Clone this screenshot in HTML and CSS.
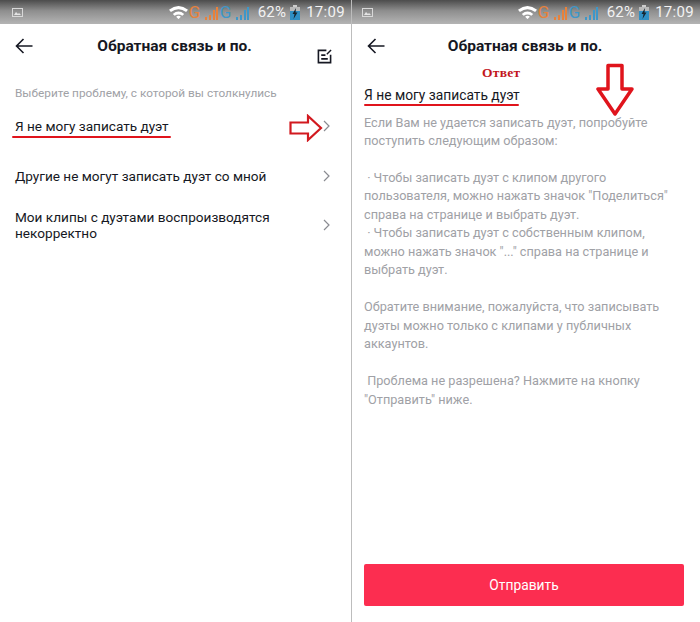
FILE: index.html
```html
<!DOCTYPE html>
<html lang="ru">
<head>
    <meta charset="UTF-8">
    <title>Обратная связь и по.</title>
    <link rel="stylesheet" href="styles.css">
</head>
<body>
    <div class="screens">
        <!-- Left screen: list of problems -->
        <section class="screen screen-left">
            <div class="status-bar">
                <svg class="pic-icon" viewBox="0 0 11 9"><rect x="0.5" y="0.5" width="10" height="8" fill="none" stroke="#d8d8d8"/><path d="M2 7l2-3 2 2 1-1 2 2z" fill="#e4e4e4"/></svg>
                <div class="status-right">
                    <svg class="wifi" viewBox="0 0 20 14"><path d="M0 4.500Q10-3 20 4.500L18 7Q10 1 2 7zM4 9Q10 4 16 9L14 11Q10 8 6 11zM7.500 12Q10 10 12.500 12L10 14.500z" fill="#fff"/></svg>
                    <span class="net net-orange">G</span>
                    <svg class="bars" viewBox="0 0 14 14"><path d="M1 14h2v-3H1zM5 14h2V9H5zM9 14h2V4H9zM12 14h2V1h-2z" fill="#e8813a"/></svg>
                    <span class="net net-blue">G</span>
                    <svg class="bars" viewBox="0 0 14 14"><path d="M1 14h2v-3H1zM5 14h2V9H5zM9 14h2V4H9zM12 14h2V1h-2z" fill="#3d97c9"/></svg>
                    <span class="percent">62%</span>
                    <svg class="battery" viewBox="0 0 10 15"><rect x="3" y="0" width="4" height="2" fill="#ccc"/><rect x="0" y="2" width="10" height="13" fill="#2f8fc4"/><rect x="0" y="2" width="10" height="4" fill="#b9b9b9"/><path d="M6 3L2.500 9h2L3.500 14 7.500 7.500h-2z" fill="#16242e"/></svg>
                    <span class="clock">17:09</span>
                </div>
            </div>
            <header class="top-bar">
                <svg class="back" viewBox="0 0 18 16"><path d="M17.500 8H1.500M8.500 1L1.500 8l7 7" fill="none" stroke="#161823" stroke-width="1.600"/></svg>
                <h1>Обратная связь и по.</h1>
                <svg class="report" viewBox="0 0 16 16"><path d="M10 1.500H1.500v13h13V6M4.500 6.500H9M4.500 10.500h7" fill="none" stroke="#161823" stroke-width="1.700"/><path d="M10.500 5.500L15 1" fill="none" stroke="#161823" stroke-width="1.500"/></svg>
            </header>
            <p class="hint">Выберите проблему, с которой вы столкнулись</p>
            <ul class="problems">
                <li class="problem problem-first">
                    <span>Я не могу записать дуэт</span>
                    <svg class="chevron" viewBox="0 0 7 12"><path d="M1 1l5 5-5 5" fill="none" stroke="#8a8b91" stroke-width="1.200"/></svg>
                </li>
                <li class="problem problem-second">
                    <span>Другие не могут записать дуэт со мной</span>
                    <svg class="chevron" viewBox="0 0 7 12"><path d="M1 1l5 5-5 5" fill="none" stroke="#8a8b91" stroke-width="1.200"/></svg>
                </li>
                <li class="problem problem-third">
                    <span>Мои клипы с дуэтами воспроизводятся некорректно</span>
                    <svg class="chevron" viewBox="0 0 7 12"><path d="M1 1l5 5-5 5" fill="none" stroke="#8a8b91" stroke-width="1.200"/></svg>
                </li>
            </ul>
            <!-- red marks drawn over the screenshot -->
            <div class="underline underline-left"></div>
            <svg class="arrow-right" viewBox="0 0 34 28"><path d="M1.500 8.500H19V2L32 14 19 26V19.500H1.500z" fill="#fff" stroke="#d2191f" stroke-width="2.200"/></svg>
        </section>

        <!-- Right screen: answer -->
        <section class="screen screen-right">
            <div class="status-bar">
                <svg class="pic-icon" viewBox="0 0 11 9"><rect x="0.5" y="0.5" width="10" height="8" fill="none" stroke="#d8d8d8"/><path d="M2 7l2-3 2 2 1-1 2 2z" fill="#e4e4e4"/></svg>
                <div class="status-right">
                    <svg class="wifi" viewBox="0 0 20 14"><path d="M0 4.500Q10-3 20 4.500L18 7Q10 1 2 7zM4 9Q10 4 16 9L14 11Q10 8 6 11zM7.500 12Q10 10 12.500 12L10 14.500z" fill="#fff"/></svg>
                    <span class="net net-orange">G</span>
                    <svg class="bars" viewBox="0 0 14 14"><path d="M1 14h2v-3H1zM5 14h2V9H5zM9 14h2V4H9zM12 14h2V1h-2z" fill="#e8813a"/></svg>
                    <span class="net net-blue">G</span>
                    <svg class="bars" viewBox="0 0 14 14"><path d="M1 14h2v-3H1zM5 14h2V9H5zM9 14h2V4H9zM12 14h2V1h-2z" fill="#3d97c9"/></svg>
                    <span class="percent">62%</span>
                    <svg class="battery" viewBox="0 0 10 15"><rect x="3" y="0" width="4" height="2" fill="#ccc"/><rect x="0" y="2" width="10" height="13" fill="#2f8fc4"/><rect x="0" y="2" width="10" height="4" fill="#b9b9b9"/><path d="M6 3L2.500 9h2L3.500 14 7.500 7.500h-2z" fill="#16242e"/></svg>
                    <span class="clock">17:09</span>
                </div>
            </div>
            <header class="top-bar">
                <svg class="back" viewBox="0 0 18 16"><path d="M17.500 8H1.500M8.500 1L1.500 8l7 7" fill="none" stroke="#161823" stroke-width="1.600"/></svg>
                <h1>Обратная связь и по.</h1>
            </header>
            <div class="answer">
                <h2>Я не могу записать дуэт</h2>
                <div class="answer-text">
                    <p>Если Вам не удается записать дуэт, попробуйте поступить следующим образом:</p>
                    <p>&nbsp;· Чтобы записать дуэт с клипом другого пользователя, можно нажать значок "Поделиться" справа на странице и выбрать дуэт.<br>&nbsp;· Чтобы записать дуэт с собственным клипом, можно нажать значок "..." справа на странице и выбрать дуэт.</p>
                    <p>Обратите внимание, пожалуйста, что записывать дуэты можно только с клипами у публичных аккаунтов.</p>
                    <p>&nbsp;Проблема не разрешена? Нажмите на кнопку "Отправить" ниже.</p>
                </div>
            </div>
            <button class="send">Отправить</button>
            <!-- red marks drawn over the screenshot -->
            <div class="answer-label">Ответ</div>
            <div class="underline underline-right"></div>
            <svg class="arrow-down" viewBox="0 0 38 54"><path d="M12 2.500H26V26H36L19 51 2 26H12z" fill="#fff" fill-opacity="0.1" stroke="#e0141c" stroke-width="3.500" stroke-linejoin="round"/></svg>
        </section>
    </div>
</body>
</html>
```

FILE: styles.css
```css
/* Reset */
* {
    margin: 0;
    padding: 0;
    box-sizing: border-box;
}

body {
    width: 700px;
    height: 622px;
    overflow: hidden;
    background: #fff;
    font-family: 'Roboto', 'Liberation Sans', sans-serif;
    color: #161823;
}

.screens {
    display: flex;
    height: 622px;
}

.screen {
    position: relative;
    display: flex;
    flex-direction: column;
    height: 622px;
}

.screen-left {
    width: 352px;
    border-right: 1px solid #bdbdbd;
}

.screen-right {
    width: 348px;
}

/* Status bar */
.status-bar {
    display: flex;
    align-items: center;
    justify-content: space-between;
    height: 24px;
    padding: 0 6px 0 12px;
    background: linear-gradient(#4c4c4c, #8e8e8e 45%, #b4b4b4);
    flex-shrink: 0;
}

.screen-right .status-bar {
    padding: 0 6px 0 10px;
}

.pic-icon {
    width: 11px;
    height: 9px;
}

.status-right {
    display: flex;
    align-items: center;
    color: #f2f2f2;
    font-size: 15px;
}

.wifi {
    width: 19px;
    height: 14px;
    margin-right: 1px;
}

.net {
    width: 13px;
    font-size: 17px;
    line-height: 20px;
}

.net-orange { color: #e8813a; }
.net-blue { color: #3d97c9; }

.bars {
    width: 18px;
    height: 14px;
    margin-top: 1px;
}

.percent {
    margin-left: 7px;
    letter-spacing: 0.2px;
}

.battery {
    width: 10px;
    height: 15px;
    margin-left: 4px;
}

.clock {
    margin-left: 6px;
    letter-spacing: 0.3px;
}

/* Title row */
.top-bar {
    position: relative;
    display: flex;
    align-items: center;
    justify-content: center;
    height: 46px;
    padding-bottom: 2px;
    flex-shrink: 0;
}

.top-bar h1 {
    font-size: 15.500px;
    font-weight: 700;
    margin-left: -2px;
}

.back {
    position: absolute;
    left: 15px;
    top: 14px;
    width: 18px;
    height: 16px;
}

.report {
    position: absolute;
    left: 317px;
    top: 25px;
    width: 15px;
    height: 15px;
}

/* Problem list */
.hint {
    margin-top: 16px;
    padding-left: 15px;
    font-size: 11.800px;
    line-height: 15px;
    color: #a0a1a6;
}

.problems {
    list-style: none;
}

.problem {
    display: flex;
    align-items: center;
    justify-content: space-between;
    padding: 0 21px 0 15px;
    font-size: 13.600px;
    line-height: 16px;
}

.problem span {
    max-width: 285px;
}

.problem-first { margin-top: 13px; height: 24px; }
.problem-second { margin-top: 26px; height: 24px; }
.problem-third { margin-top: 20px; height: 34px; }

.chevron {
    width: 7px;
    height: 12px;
    flex-shrink: 0;
}

/* Answer */
.answer {
    flex: 1;
    padding: 15px 16px 0 12px;
}

.answer h2 {
    font-size: 13.800px;
    font-weight: 400;
    line-height: 20px;
}

.answer-text {
    margin-top: 8.500px;
    font-size: 12.700px;
    line-height: 18.470px;
    color: #a0a1a6;
}

.answer-text p + p {
    margin-top: 18.470px;
}

.send {
    align-self: flex-start;
    width: 320px;
    height: 42px;
    margin: 0 0 16px 12px;
    border: none;
    border-radius: 2px;
    background: #fc2d50;
    color: #fff;
    font-family: inherit;
    font-size: 13.800px;
}

/* Red annotations */
.underline {
    position: absolute;
    height: 2px;
    background: #e0141c;
    border-radius: 1px;
}

.underline-left {
    left: 12px;
    top: 136px;
    width: 159px;
}

.underline-right {
    left: 12px;
    top: 104px;
    width: 155px;
}

.arrow-right {
    position: absolute;
    left: 289px;
    top: 114px;
    width: 34px;
    height: 28px;
}

.arrow-down {
    position: absolute;
    left: 244px;
    top: 63px;
    width: 38px;
    height: 54px;
}

.answer-label {
    position: absolute;
    left: 130px;
    top: 65px;
    font-family: 'Liberation Serif', serif;
    font-size: 13.500px;
    font-weight: 700;
    color: #c3161c;
    letter-spacing: 0.3px;
}
```
